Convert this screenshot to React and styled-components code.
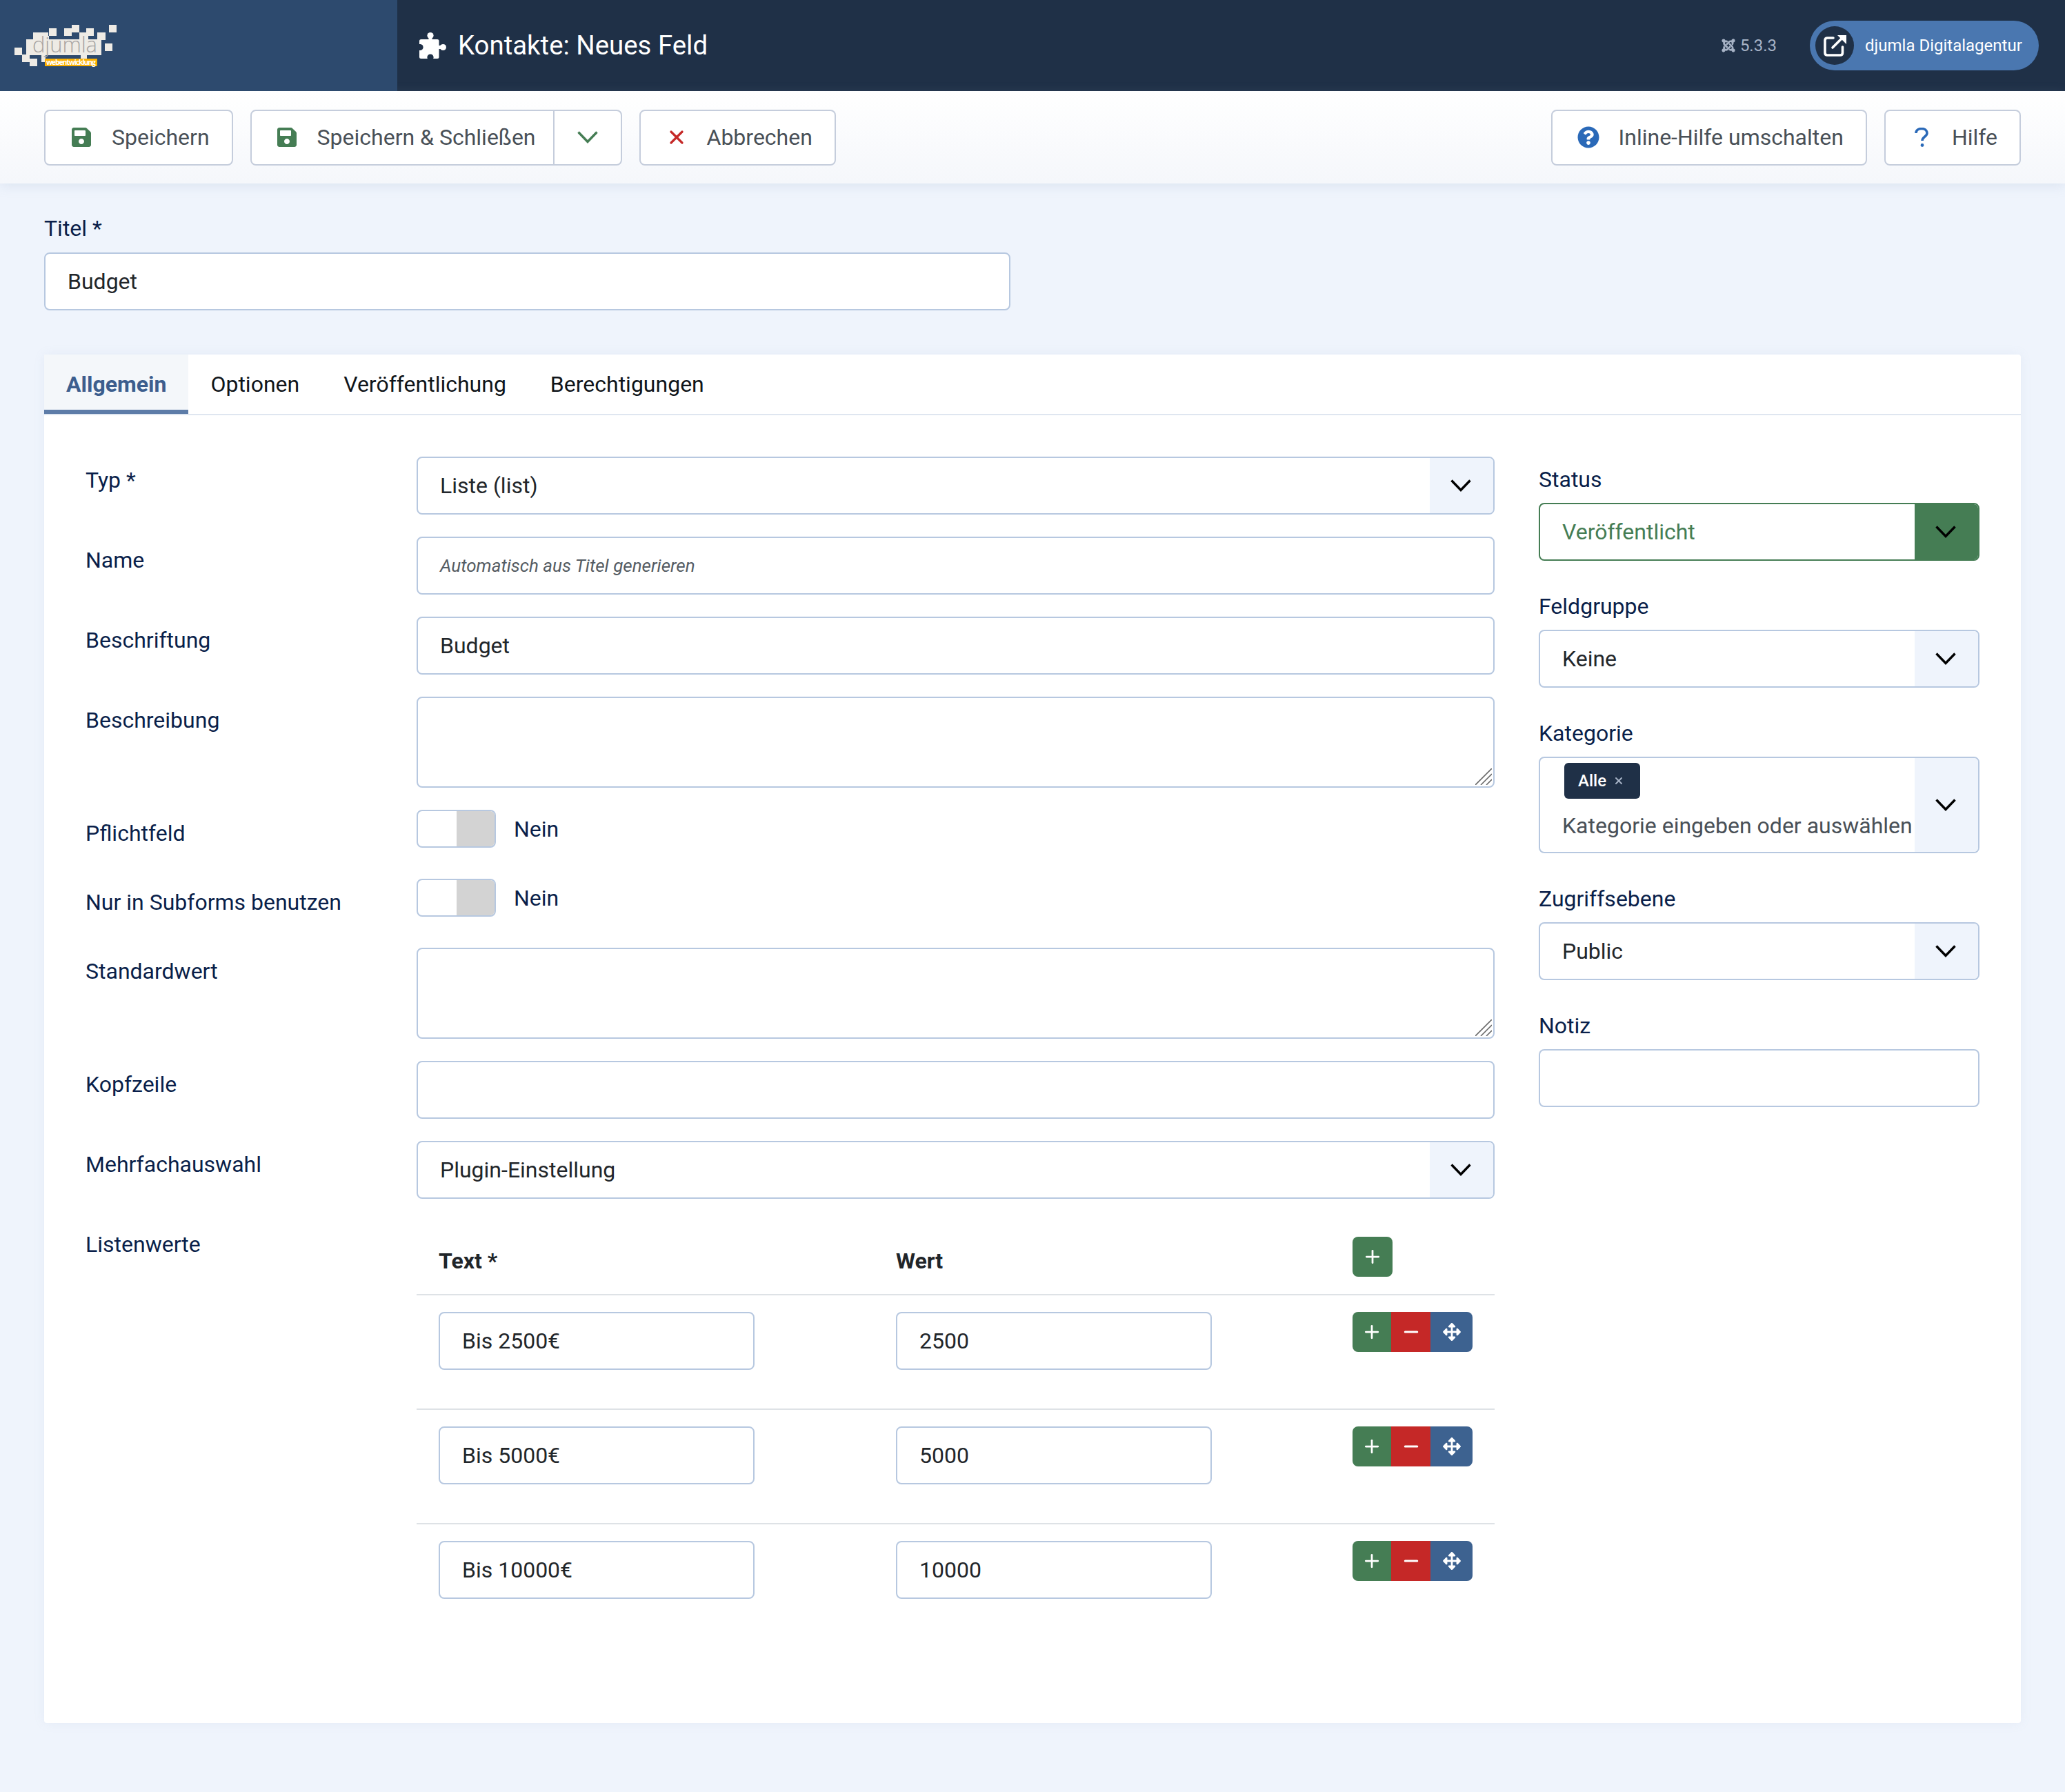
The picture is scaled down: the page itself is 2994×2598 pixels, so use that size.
import styled, { createGlobalStyle } from "styled-components";
import { FaSave, FaQuestionCircle, FaArrowsAlt, FaJoomla } from "react-icons/fa";
import { Plus, Minus, X } from "lucide-react";

const GlobalStyle = createGlobalStyle`
  html, body { margin: 0; padding: 0; background: #eff4fc; }
  * { box-sizing: border-box; }
  body { font-family: Roboto, "Liberation Sans", sans-serif; font-size: 32px; line-height: 48px; color: #22262a; }
`;

const Page = styled.div`
  width: 2994px;
  height: 2598px;
  background: #eff4fc;
  overflow: hidden;
`;

const Header = styled.header`
  display: flex;
  align-items: center;
  height: 132px;
  background: #1f3047;
  color: #fff;
`;

const LogoBox = styled.div`
  width: 576px;
  height: 132px;
  background: #2d4a6e;
  padding: 32px 0 0 20px;
`;

const PageTitle = styled.h1`
  display: flex;
  align-items: center;
  gap: 17px;
  margin: 0 0 0 32px;
  flex: 1;
  font-size: 38.4px;
  font-weight: 400;
  line-height: 48px;
`;

const Version = styled.div`
  display: flex;
  align-items: center;
  gap: 6px;
  margin-right: 48px;
  font-size: 24px;
  color: #a7b3c6;
`;

const SitePill = styled.a`
  display: flex;
  align-items: center;
  gap: 16px;
  width: 332px;
  height: 72px;
  margin-right: 38px;
  padding-left: 8px;
  border-radius: 36px;
  background: #4a77b0;
  font-size: 24px;
  font-weight: 400;
  color: #fff;
  white-space: nowrap;
`;

const PillIcon = styled.span`
  display: flex;
  align-items: center;
  justify-content: center;
  width: 56px;
  height: 56px;
  border-radius: 50%;
  background: #1f3047;
`;

const Toolbar = styled.div`
  display: flex;
  align-items: center;
  gap: 25px;
  height: 134px;
  padding: 0 64px;
  background: linear-gradient(#fff, #f5f7fb);
  box-shadow: 0 4px 16px rgba(140, 160, 195, 0.18);
`;

const Button = styled.button`
  display: flex;
  align-items: center;
  height: 81px;
  padding: 0 32px 0 36px;
  gap: 28px;
  background: #fff;
  border: 2px solid #c5cddc;
  border-radius: 8px;
  font: 400 32px/48px Roboto, sans-serif;
  color: #495057;
  white-space: nowrap;
  margin-left: ${p => (p.$push ? "auto" : "0")};
`;

const ButtonSplit = styled(Button)`
  padding: 0;
  gap: 0;
`;

const SplitMain = styled.span`
  display: flex;
  align-items: center;
  gap: 28px;
  height: 100%;
  padding: 0 25px 0 35px;
`;

const SplitArrow = styled.span`
  display: flex;
  align-items: center;
  justify-content: center;
  width: 98px;
  height: 100%;
  border-left: 2px solid #c5cddc;
  color: #457d54;
`;

const Icon = styled.span`
  display: flex;
  width: 32px;
  justify-content: center;
  font-size: 32px;
  color: ${p => p.$color || "#457d54"};
`;

const Main = styled.main`
  padding: 41px 64px 0;
`;

const TitleLabel = styled.label`
  display: block;
  margin-bottom: 11px;
  color: #0a1f4a;
`;

const Field = styled.div`
  display: flex;
  align-items: center;
  width: ${p => p.$width || "100%"};
  height: 84px;
  padding: 0 32px;
  background: #fff;
  border: 2px solid #b7c8e0;
  border-radius: 8px;
  color: #22262a;
  white-space: nowrap;
`;

const HintField = styled(Field)`
  font-size: 26px;
  font-style: italic;
  color: #555c63;
`;

const TextAreaBox = styled.div`
  position: relative;
  height: 132px;
`;

const TextArea = styled.textarea`
  display: block;
  width: 100%;
  height: 100%;
  margin: 0;
  background: #fff;
  border: 2px solid #b7c8e0;
  border-radius: 8px;
  outline: none;
  resize: none;
`;

const ResizeGrip = styled.svg`
  position: absolute;
  right: 4px;
  bottom: 4px;
`;

const Select = styled.div`
  display: flex;
  width: 100%;
  height: ${p => p.$height || "84px"};
  background: #fff;
  border: 2px solid ${p => (p.$green ? "#457d54" : "#b7c8e0")};
  border-radius: 8px;
  color: ${p => (p.$green ? "#457d54" : "#22262a")};
  overflow: hidden;
`;

const SelectValue = styled.div`
  flex: 1;
  display: flex;
  align-items: center;
  padding-left: 32px;
  white-space: nowrap;
`;

const SelectArrow = styled.div`
  display: flex;
  align-items: center;
  justify-content: center;
  width: 92px;
  padding-right: 2px;
  background: ${p => (p.$green ? "#457d54" : "#eff4fc")};
  color: #000;
`;

const Card = styled.section`
  height: 1984px;
  margin-top: 64px;
  background: #fff;
  border-radius: 4px;
  box-shadow: 0 0 16px rgba(140, 160, 195, 0.1);
`;

const Tabs = styled.nav`
  display: flex;
  height: 88px;
  border-bottom: 2px solid #dfe6f0;
`;

const Tab = styled.div`
  display: flex;
  align-items: center;
  height: 86px;
  padding: ${p => (p.$active ? "6px 32px 0" : "0 32px")};
  color: ${p => (p.$active ? "#3c5e8e" : "#10151a")};
  font-weight: ${p => (p.$active ? 700 : 400)};
  background: ${p => (p.$active ? "#f4f7fa" : "transparent")};
  border-bottom: ${p => (p.$active ? "6px solid #5d7ca8" : "0")};
`;

const Body = styled.div`
  display: grid;
  grid-template-columns: 2043px 639px;
  column-gap: 64px;
  padding: 60px 60px 0;
`;

const Row = styled.div`
  display: grid;
  grid-template-columns: 480px 1563px;
  margin-bottom: ${p => p.$gap || "32px"};
`;

const RowLabel = styled.label`
  padding-top: 10px;
  color: #0a1f4a;
`;

const ToggleLine = styled.div`
  display: flex;
  align-items: flex-start;
  gap: 26px;
  color: #0a1f4a;
  height: 55px;
  line-height: 57px;
`;

const Toggle = styled.div`
  display: grid;
  grid-template-columns: 1fr 1fr;
  width: 115px;
  height: 55px;
  border: 2px solid #b7c8e0;
  border-radius: 8px;
  overflow: hidden;
  background: #fff;
`;

const ToggleKnob = styled.div`
  grid-column: 2;
  background: #d3d3d3;
`;

const SideLabel = styled.label`
  display: block;
  padding-top: 9px;
  margin-bottom: 10px;
  color: #0a1f4a;
`;

const SideGroup = styled.div`
  margin-bottom: 33px;
`;

const Subform = styled.table`
  width: 1563px;
  border-collapse: collapse;
  table-layout: fixed;
`;

const Th = styled.th`
  padding: 0 32px 24px;
  height: 107px;
  text-align: left;
  font-weight: 700;
  vertical-align: bottom;
  color: #212529;
`;

const ThAction = styled(Th)`
  padding: 23px 32px 0;
  vertical-align: top;
`;

const Tr = styled.tr`
  border-top: 2px solid #dee2e6;
`;

const Td = styled.td`
  height: 166px;
  padding: 24px 32px 0;
  vertical-align: top;
`;

const ButtonGroup = styled.div`
  display: inline-flex;
  border-radius: 8px;
  overflow: hidden;
`;

const GroupButton = styled.div`
  display: flex;
  align-items: center;
  justify-content: center;
  width: ${p => p.$width || "57px"};
  height: 58px;
  background: ${p => p.$bg};
  color: #fff;
`;

const AddButton = styled(GroupButton)`
  border-radius: 8px;
`;

const Tag = styled.div`
  display: inline-flex;
  align-items: center;
  gap: 10px;
  height: 52px;
  margin: 7px 0 0 35px;
  padding: 0 20px;
  width: 110px;
  background: #1f3047;
  border-radius: 6px;
  color: #fff;
  font-size: 24px;
  font-weight: 500;
`;

const TagClose = styled.span`
  display: flex;
  color: #a7b3c6;
`;

const Placeholder = styled.div`
  padding: 2px 0 0 32px;
  margin-top: 13px;
  color: #495057;
  white-space: nowrap;
`;

const CategoryValue = styled.div`
  flex: 1;
  min-width: 0;
`;

// pixel blocks of the logo, in page coordinates
const logoBlocks = [
  [21, 69, 11, 11], [38, 57, 109, 23], [48, 47, 22, 11], [71, 41, 11, 11],
  [60, 52, 11, 8], [93, 41, 11, 11], [104, 36, 11, 11], [115, 47, 13, 11],
  [125, 41, 11, 11], [141, 47, 12, 11], [158, 36, 11, 11], [152, 63, 11, 11],
  [32, 79, 11, 11], [43, 85, 11, 11], [60, 79, 6, 11], [117, 79, 9, 7],
];

const Logo = () => (
  <svg width="152" height="66" viewBox="20 32 152 66">
    <g fill="#eeebe5">
      {logoBlocks.map(([x, y, w, h]) => <rect key={`${x}-${y}`} x={x} y={y} width={w} height={h} />)}
    </g>
    <text x="47" y="76" fontFamily="Open Sans, sans-serif" fontSize="31" fontWeight="300" fill="#a8a4a2" textLength="94">djumla</text>
    <rect x="65" y="85" width="76" height="11" fill="#fdb100" />
    <text x="67" y="94" fontFamily="Open Sans, sans-serif" fontSize="10.5" fontWeight="700" fill="#fff" textLength="72">webentwicklung</text>
  </svg>
);

const PuzzleIcon = () => (
  <svg width="39" height="38" viewBox="0 0 39 38">
    <g fill="#fff">
      <rect x="0" y="10" width="28.5" height="28" rx="2.5" />
      <circle cx="16" cy="4.6" r="4.6" />
      <rect x="13.5" y="6" width="5" height="6" />
      <circle cx="34.4" cy="21.5" r="4.6" />
      <rect x="27" y="19" width="6" height="5" />
    </g>
    <g fill="#1f3047">
      <circle cx="1" cy="21.5" r="4.6" />
      <circle cx="16" cy="36" r="4.6" />
    </g>
    <path d="M13.6 38 H18.4 V36 H13.6 Z" fill="#1f3047" />
  </svg>
);

const Chevron = () => (
  <svg width="30" height="18" viewBox="0 0 30 18" fill="none" stroke="currentColor" strokeWidth="3.4">
    <path d="M1.5 1.5 L15 15.5 L28.5 1.5" />
  </svg>
);

const OutIcon = () => (
  <svg width="33" height="32" viewBox="0 0 33 32" fill="none" stroke="#fff" strokeWidth="3.6" strokeLinecap="round">
    <path d="M14 5 H5.5 Q2 5 2 8.5 V26.5 Q2 30 5.5 30 H24 Q27.5 30 27.5 26.5 V18" />
    <path d="M13 19 L26 6" />
    <path d="M20 1 H33 V14 Z" fill="#fff" stroke="none" />
  </svg>
);

const QuestionIcon = () => (
  <svg width="20" height="28" viewBox="0 0 20 28" fill="none" stroke="currentColor" strokeWidth="3.6">
    <path d="M2 8c0-4 3.5-6.5 8-6.5s8 2.5 8 6.5c0 5-7 5.5-7 11" />
    <circle cx="11" cy="25.5" r="2.4" fill="currentColor" stroke="none" />
  </svg>
);

const Grip = () => (
  <ResizeGrip width="24" height="24" viewBox="0 0 24 24" stroke="#6c6c6c" strokeWidth="1.6">
    <path d="M0 24 L24 0 M8 24 L24 8 M16 24 L24 16" />
  </ResizeGrip>
);

const RowActions = () => (
  <ButtonGroup>
    <GroupButton $bg="#457d54" $width="56px"><Plus size={30} strokeWidth={2.2} /></GroupButton>
    <GroupButton $bg="#c52827"><Minus size={30} strokeWidth={2.4} /></GroupButton>
    <GroupButton $bg="#3d6290" $width="61px"><FaArrowsAlt size={26} /></GroupButton>
  </ButtonGroup>
);

const listRows = [
  ["Bis 2500€", "2500"],
  ["Bis 5000€", "5000"],
  ["Bis 10000€", "10000"],
];

export default function App() {
  return (
    <Page>
      <GlobalStyle />
      <Header>
        <LogoBox><Logo /></LogoBox>
        <PageTitle><PuzzleIcon />Kontakte: Neues Feld</PageTitle>
        <Version><FaJoomla size={22} />5.3.3</Version>
        <SitePill>
          <PillIcon><OutIcon /></PillIcon>
          djumla Digitalagentur
        </SitePill>
      </Header>

      <Toolbar>
        <Button>
          <Icon><FaSave /></Icon>Speichern
        </Button>
        <ButtonSplit>
          <SplitMain><Icon><FaSave /></Icon>Speichern &amp; Schließen</SplitMain>
          <SplitArrow><Chevron /></SplitArrow>
        </ButtonSplit>
        <Button>
          <Icon $color="#c52827"><X size={32} strokeWidth={2.4} /></Icon>Abbrechen
        </Button>
        <Button $push>
          <Icon $color="#2a69b8"><FaQuestionCircle /></Icon>Inline-Hilfe umschalten
        </Button>
        <Button>
          <Icon $color="#2a69b8"><QuestionIcon /></Icon>Hilfe
        </Button>
      </Toolbar>

      <Main>
        <TitleLabel>Titel *</TitleLabel>
        <Field $width="1401px">Budget</Field>

        <Card>
          <Tabs>
            <Tab $active>Allgemein</Tab>
            <Tab>Optionen</Tab>
            <Tab>Veröffentlichung</Tab>
            <Tab>Berechtigungen</Tab>
          </Tabs>
          <Body>
            <div>
              <Row>
                <RowLabel>Typ *</RowLabel>
                <Select><SelectValue>Liste (list)</SelectValue><SelectArrow><Chevron /></SelectArrow></Select>
              </Row>
              <Row>
                <RowLabel>Name</RowLabel>
                <HintField>Automatisch aus Titel generieren</HintField>
              </Row>
              <Row>
                <RowLabel>Beschriftung</RowLabel>
                <Field>Budget</Field>
              </Row>
              <Row>
                <RowLabel>Beschreibung</RowLabel>
                <TextAreaBox><TextArea /><Grip /></TextAreaBox>
              </Row>
              <Row $gap="42px">
                <RowLabel>Pflichtfeld</RowLabel>
                <ToggleLine><Toggle><ToggleKnob /></Toggle>Nein</ToggleLine>
              </Row>
              <Row $gap="42px">
                <RowLabel>Nur in Subforms benutzen</RowLabel>
                <ToggleLine><Toggle><ToggleKnob /></Toggle>Nein</ToggleLine>
              </Row>
              <Row>
                <RowLabel>Standardwert</RowLabel>
                <TextAreaBox><TextArea /><Grip /></TextAreaBox>
              </Row>
              <Row>
                <RowLabel>Kopfzeile</RowLabel>
                <Field />
              </Row>
              <Row>
                <RowLabel>Mehrfachauswahl</RowLabel>
                <Select><SelectValue>Plugin-Einstellung</SelectValue><SelectArrow><Chevron /></SelectArrow></Select>
              </Row>
              <Row>
                <RowLabel>Listenwerte</RowLabel>
                <Subform>
                  <colgroup>
                    <col width="663" />
                    <col width="662" />
                    <col width="238" />
                  </colgroup>
                  <thead>
                    <tr>
                      <Th>Text *</Th>
                      <Th>Wert</Th>
                      <ThAction>
                        <AddButton $bg="#457d54" $width="58px"><Plus size={30} strokeWidth={2.2} /></AddButton>
                      </ThAction>
                    </tr>
                  </thead>
                  <tbody>
                    {listRows.map(([text, value]) => (
                      <Tr key={value}>
                        <Td><Field $width="458px">{text}</Field></Td>
                        <Td><Field $width="458px">{value}</Field></Td>
                        <Td><RowActions /></Td>
                      </Tr>
                    ))}
                  </tbody>
                </Subform>
              </Row>
            </div>

            <aside>
              <SideGroup>
                <SideLabel>Status</SideLabel>
                <Select $green><SelectValue>Veröffentlicht</SelectValue><SelectArrow $green><Chevron /></SelectArrow></Select>
              </SideGroup>
              <SideGroup>
                <SideLabel>Feldgruppe</SideLabel>
                <Select><SelectValue>Keine</SelectValue><SelectArrow><Chevron /></SelectArrow></Select>
              </SideGroup>
              <SideGroup>
                <SideLabel>Kategorie</SideLabel>
                <Select $height="140px">
                  <CategoryValue>
                    <Tag>Alle<TagClose><X size={16} strokeWidth={3} /></TagClose></Tag>
                    <Placeholder>Kategorie eingeben oder auswählen</Placeholder>
                  </CategoryValue>
                  <SelectArrow><Chevron /></SelectArrow>
                </Select>
              </SideGroup>
              <SideGroup>
                <SideLabel>Zugriffsebene</SideLabel>
                <Select><SelectValue>Public</SelectValue><SelectArrow><Chevron /></SelectArrow></Select>
              </SideGroup>
              <SideGroup>
                <SideLabel>Notiz</SideLabel>
                <Field />
              </SideGroup>
            </aside>
          </Body>
        </Card>
      </Main>
    </Page>
  );
}
